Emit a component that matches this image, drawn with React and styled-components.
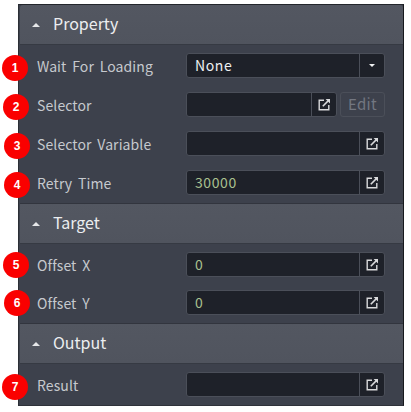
import React from "react";
import styled, { createGlobalStyle } from "styled-components";

const Global = createGlobalStyle`
  html, body { margin: 0; padding: 0; background: #fff; }
  body { font-family: "Noto Sans CJK KR", "Noto Sans", sans-serif; }
`;
const Panel = styled.div`
  box-sizing: border-box;
  width: 386px;
  height: 402px;
  margin: 4px 0 0 18px;
  background: #3d414c;
  border-top: 1px solid #23262c;
  border-left: 1px solid #2b2e35;
  border-right: 1px solid #17191d;
  border-bottom: 1px solid #2f323a;
  display: flex;
  flex-direction: column;
`;
const Header = styled.div`
  box-sizing: border-box;
  height: ${p => (p.$first ? 40 : 41)}px;
  flex: none;
  margin: ${p => (p.$first ? "0" : "8px")} 0 0 1px;
  display: flex;
  align-items: center;
  padding-left: 12px;
  gap: 13px;
  background: linear-gradient(#535761, #50545e);
  border-bottom: 1px solid #363a43;
  border-top: ${p => (p.$first ? "0" : "1px solid #32353e")};
  border-radius: ${p => (p.$first ? "3px 3px 0 0" : "0")};
  color: #eceef0;
  font-size: 16px;
  line-height: 20px;
`;
const Title = styled.span`
  padding-bottom: 4px;
`;
const Caret = styled.span`
  width: 0;
  height: 0;
  border-left: 4.5px solid transparent;
  border-right: 4.5px solid transparent;
  border-bottom: 4.5px solid #e6e7e9;
`;
const Row = styled.div`
  position: relative;
  box-sizing: border-box;
  height: ${p => p.$h}px;
  flex: none;
  display: flex;
  align-items: center;
  padding: ${p => p.$h - 25}px 17px 0 18px;
`;
const Label = styled.span`
  width: 149px;
  flex: none;
  color: #c6c9ce;
  font-size: 14px;
  line-height: 20px;
  letter-spacing: 0.1px;
  word-spacing: 2.5px;
`;
const Badge = styled.span`
  position: absolute;
  left: ${p => p.$x - 13 - 19}px;
  top: ${p => p.$y}px;
  width: 26px;
  height: 26px;
  border-radius: 50%;
  background: #fa0000;
  color: #fff;
  font-family: "Liberation Sans", sans-serif;
  font-size: 12px;
  font-weight: 700;
  display: flex;
  align-items: center;
  justify-content: center;
`;
const Field = styled.div`
  box-sizing: border-box;
  width: ${p => p.$w}px;
  height: 25px;
  flex: none;
  display: flex;
  background: #1e2129;
  border: 1px solid #4b4f59;
  border-radius: 3px;
`;
const Value = styled.div`
  flex: 1;
  padding-left: 8px;
  color: ${p => (p.$num ? "#a9c08f" : "#eef0f2")};
  font-size: 14px;
  line-height: 22px;
  letter-spacing: 0.6px;
`;
const Side = styled.div`
  width: 24px;
  flex: none;
  border-left: 1px solid #4b4f59;
  display: flex;
  align-items: center;
  justify-content: center;
`;
const EditBtn = styled.div`
  box-sizing: border-box;
  width: 45px;
  height: 25px;
  flex: none;
  margin-left: 3px;
  border: 1px solid #4b4f59;
  border-radius: 3px;
  color: #737781;
  font-size: 15px;
  line-height: 22px;
  letter-spacing: 0.3px;
  text-align: center;
`;
const DownCaret = styled.span`
  width: 0;
  height: 0;
  border-left: 3.5px solid transparent;
  border-right: 3.5px solid transparent;
  border-top: 3.5px solid #f0f1f2;
`;

const ExternalIcon = () => (
  <svg width="13" height="13" viewBox="0 0 13 13" fill="none" stroke="#d9dadc">
    <path d="M6 2.2H1.2V11.8H10.8V7" strokeWidth="1.4" />
    <path d="M4.8 8.2L10.6 2.4" strokeWidth="1.6" />
    <path d="M7.6 1H12V5.4Z" fill="#d9dadc" stroke="none" />
  </svg>
);

const PropertyRow = ({ n, label, h, by, bx, value, num, kind }) => (
  <Row $h={h}>
    <Badge $x={bx} $y={by}>{n}</Badge>
    <Label>{label}</Label>
    <Field $w={kind === "edit" ? 151 : 199}>
      <Value $num={num}>{value}</Value>
      <Side>{kind === "select" ? <DownCaret /> : <ExternalIcon />}</Side>
    </Field>
    {kind === "edit" && <EditBtn>Edit</EditBtn>}
  </Row>
);

const Section = ({ title, first }) => (
  <Header $first={first}>
    <Caret />
    <Title>{title}</Title>
  </Header>
);

export default function App() {
  return (
    <>
      <Global />
      <Panel>
        <Section title="Property" first />
        <PropertyRow n={1} label="Wait For Loading" h={33} by={10} bx={15} value="None" kind="select" />
        <PropertyRow n={2} label="Selector" h={39} by={16} bx={16} kind="edit" />
        <PropertyRow n={3} label="Selector Variable" h={39} by={16} bx={17} />
        <PropertyRow n={4} label="Retry Time" h={39} by={16} bx={17} value="30000" num />
        <Section title="Target" />
        <PropertyRow n={5} label="Offset X" h={33} by={8} bx={16} value="0" num />
        <PropertyRow n={6} label="Offset Y" h={38} by={13} bx={17} value="0" num />
        <Section title="Output" />
        <PropertyRow n={7} label="Result" h={33} by={10} bx={15} />
      </Panel>
    </>
  );
}
